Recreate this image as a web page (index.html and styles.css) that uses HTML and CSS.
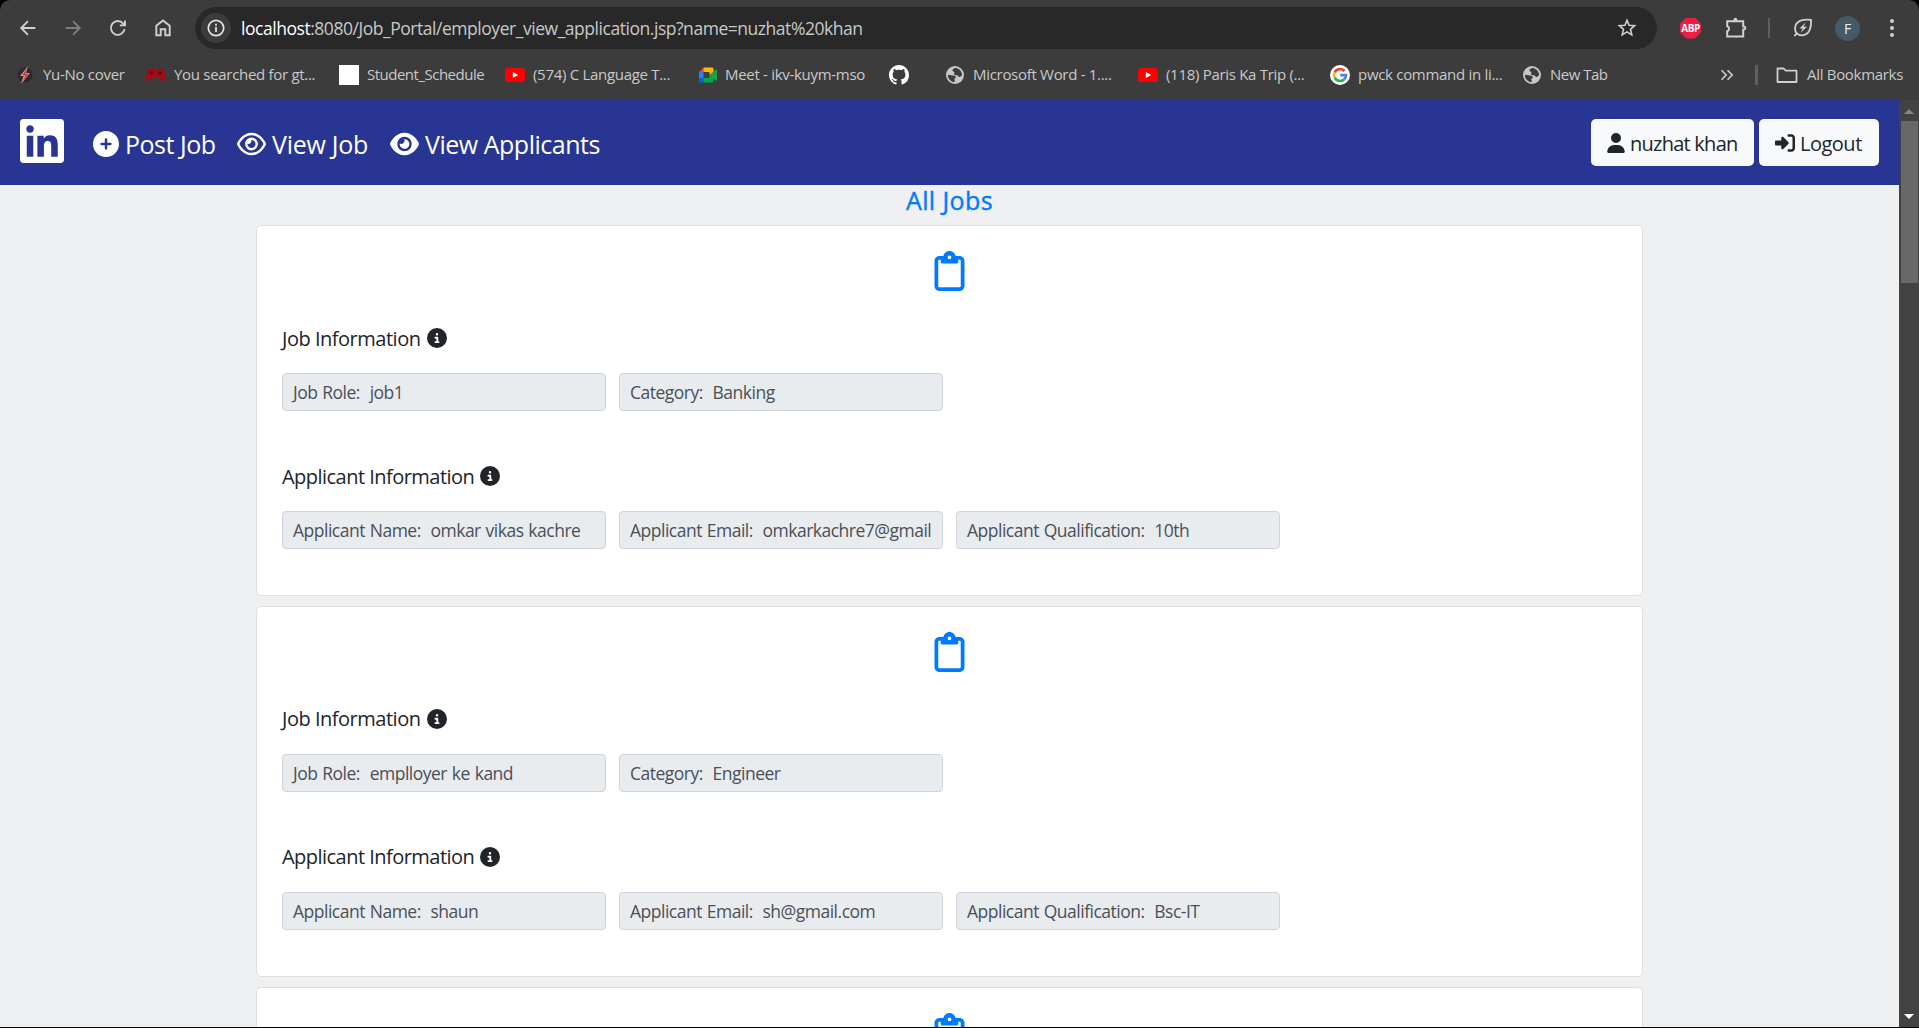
FILE: index.html
```html
<!DOCTYPE html>
<html lang="en">
<head>
<meta charset="utf-8">
<title>All Jobs</title>
<link rel="stylesheet" href="styles.css">
</head>
<body>
<svg class="sprite" aria-hidden="true">
  <symbol id="info" viewBox="0 0 512 512"><path d="M256 512A256 256 0 1 0 256 0a256 256 0 1 0 0 512zM216 336h24V272H216c-13.3 0-24-10.7-24-24s10.7-24 24-24h48c13.3 0 24 10.7 24 24v88h8c13.3 0 24 10.7 24 24s-10.7 24-24 24H216c-13.3 0-24-10.7-24-24s10.7-24 24-24zm40-208a32 32 0 1 1 0 64 32 32 0 1 1 0-64z"/></symbol>
  <symbol id="clipboard" viewBox="0 0 384 512"><path d="M280 64h40c35.3 0 64 28.7 64 64V448c0 35.3-28.7 64-64 64H64c-35.3 0-64-28.7-64-64V128C0 92.7 28.7 64 64 64h40 9.6C121 27.5 153.3 0 192 0s71 27.5 78.4 64H280zM64 112c-8.8 0-16 7.2-16 16V448c0 8.8 7.2 16 16 16H320c8.8 0 16-7.2 16-16V128c0-8.8-7.2-16-16-16H304v24c0 13.3-10.7 24-24 24H192 104c-13.3 0-24-10.7-24-24V112H64zm128-8a24 24 0 1 0 0-48 24 24 0 1 0 0 48z"/></symbol>
  <symbol id="youtube" viewBox="0 0 20 14"><rect width="20" height="14" rx="3.2" fill="#f00"/><path d="M7.8 4v6l5.4-3z" fill="#fff"/></symbol>
  <symbol id="globe" viewBox="0 0 18 18"><circle cx="9" cy="9" r="9" fill="#c4c7cb"/><path fill="#3c3c3c" d="M9.6 1.9C7.800 2.300 6.200 3 6.500 4.500c.2 1.200 1.500 1 1.900 1.700.4.900-.6 1.200-.5 2 .2 1.100 2 .8 3.200 1 1.300.3 1 1.600 2.300 1.700 1.200.1 1.600-.9 2.700-1.300.2-3.400-2.200-7.200-6.500-7.700zM1.900 8.700c-.1 4.200 3 7.100 6.600 7.400.4-.9.500-1.600 0-2.200-.5-.7.3-1.400 1-1.900.8-.7.200-1.800-.9-2.200-2-.6-4.400-.9-6.700-1.100z"/></symbol>
</svg>

<div class="browser">
  <div class="toolbar">
    <div class="nav-icons">
      <svg width="20" height="20" viewBox="0 0 20 20"><path d="M17.3 10H3.5M10 3.2 3.2 10l6.8 6.8" fill="none" stroke="#d0d0d0" stroke-width="1.9"/></svg>
      <svg width="20" height="20" viewBox="0 0 20 20"><path d="M2.7 10h13.8M10 3.2l6.8 6.8-6.8 6.8" fill="none" stroke="#7d7d7d" stroke-width="1.9"/></svg>
      <svg width="20" height="20" viewBox="0 0 20 20"><path d="M16.6 11.2A6.9 6.9 0 1 1 15 5.4l1.4 1.5M17 2.4v5h-5.2" fill="none" stroke="#d0d0d0" stroke-width="1.9"/></svg>
      <svg width="20" height="20" viewBox="0 0 20 20"><path d="M3.3 17.2V7.8L10 2.4l6.7 5.4v9.4h-4.4v-6H7.7v6z" fill="none" stroke="#d0d0d0" stroke-width="1.9"/></svg>
    </div>
    <div class="address">
      <span class="site-info"><svg width="18" height="18" viewBox="0 0 18 18"><circle cx="9" cy="9" r="7.7" fill="none" stroke="#e3e3e3" stroke-width="1.7"/><path d="M9 8v5M9 4.8v1.9" stroke="#e3e3e3" stroke-width="1.8"/></svg></span>
      <span class="url"><b>localhost</b>:8080/Job_Portal/employer_view_application.jsp?name=nuzhat%20khan</span>
      <svg class="star" width="20" height="20" viewBox="0 0 20 20"><path d="m10 2.200 2.100 5 5.600.5-4.200 3.700 1.300 5.500-4.800-3-4.800 3 1.300-5.500-4.200-3.700 5.600-.5z" fill="none" stroke="#d0d0d0" stroke-width="1.600"/></svg>
    </div>
    <div class="tools">
      <span class="abp">ABP</span>
      <svg class="ext" width="22" height="22" viewBox="0 0 22 22"><path d="M2.200 4.200h16v5.300h.6a1.500 1.500 0 0 1 0 3h-.6v6.900h-16v-5.100a2.600 2.600 0 0 0 0-5z" fill="none" stroke="#d0d0d0" stroke-width="2"/><path d="M8.500 4V2.700a1.900 1.900 0 0 1 3.800 0V4z" fill="#d0d0d0"/></svg>
      <i class="rule"></i>
      <svg class="leaf" width="20" height="20" viewBox="0 0 20 20"><path d="M18 1.800c-7-.8-15.600.3-16 8.600-.1 4 3 7 6.800 6.900C16.700 17 18.600 9 18 1.800zM4.400 14.800 1.300 18" fill="none" stroke="#d0d0d0" stroke-width="1.800"/><path d="M12.500 4.500 6.500 10.500h3.200l-2 4.300 6.300-6h-3.300z" fill="#d0d0d0"/></svg>
      <span class="avatar">F</span>
      <svg class="dots" width="6" height="20" viewBox="0 0 6 20"><g fill="#d0d0d0"><circle cx="3" cy="3" r="2"/><circle cx="3" cy="10" r="2"/><circle cx="3" cy="17" r="2"/></g></svg>
    </div>
  </div>

  <div class="bookmarks">
    <span class="bm"><svg viewBox="0 0 20 20"><circle cx="10" cy="10" r="7.500" fill="#2b2b2e"/><path d="M13 1 5 11h3.500L6 19l9-11h-4z" fill="#e8858c"/><path d="m11.500 4-3.800 6h3l-2.200 5 4.500-6h-3z" fill="#c32c3b"/></svg><span>Yu-No cover</span></span>
    <span class="bm"><svg viewBox="0 0 20 20"><path d="M4 3.600h3l1 1h4l1-1h3c2.600 0 3.600 5.400 4 9.800.2 3.200-2.600 4.200-4.200 2L14 13H6l-1.800 2.400c-1.600 2.200-4.400 1.200-4.200-2 .4-4.400 1.400-9.800 4-9.800z" fill="#a00b14"/><path d="M5.500 6v4M3.500 8h4" stroke="#5d060c" stroke-width="1.200"/><circle cx="14" cy="8" r="1.700" fill="#5d060c"/></svg><span>You searched for gt...</span></span>
    <span class="bm"><svg viewBox="0 0 20 20"><path d="M0 0h20v20H0z" fill="#fff"/></svg><span class="tight">Student_Schedule</span></span>
    <span class="bm"><svg viewBox="0 -3 20 20"><use href="#youtube" width="20" height="14"/></svg><span>(574) C Language T...</span></span>
    <span class="bm meet"><svg viewBox="0 0 20 20"><path d="M1 7h4.500v6H1z" fill="#2684fc"/><path d="M5.500 2.500V7H1z" fill="#ea4335"/><path d="M5.500 2.500h8.700q1.300 0 1.300 1.300V7l-4 3V7h-6z" fill="#ffba00"/><path d="M1 13h4.500v4.500H2.300Q1 17.500 1 16.200z" fill="#0066da"/><path d="M5.500 13h6v-3l4 3v3.200q0 1.300-1.300 1.300H5.500z" fill="#00ac47"/><path d="m11.500 10 6.400-5.600q1.100-.6 1.100.6v10q0 1.200-1.100.6z" fill="#1fa14b"/></svg><span>Meet - ikv-kuym-mso</span></span>
    <span class="bm"><svg viewBox="0 0 16 16"><path fill="#fff" d="M8 0C3.580 0 0 3.580 0 8c0 3.540 2.290 6.530 5.470 7.590.4.070.55-.17.55-.38 0-.19-.01-.82-.01-1.490-2.010.37-2.530-.49-2.690-.94-.09-.23-.48-.94-.82-1.130-.28-.15-.68-.52-.01-.53.630-.01 1.080.58 1.230.82.720 1.210 1.870.87 2.330.66.070-.52.280-.87.510-1.070-1.780-.2-3.640-.89-3.640-3.950 0-.87.310-1.590.820-2.150-.08-.2-.36-1.020.080-2.120 0 0 .67-.21 2.200.82.640-.18 1.320-.27 2-.27s1.360.09 2 .27c1.530-1.040 2.200-.82 2.200-.82.440 1.100.160 1.920.080 2.120.510.56.820 1.270.820 2.150 0 3.070-1.870 3.750-3.650 3.950.290.25.540.73.540 1.480 0 1.070-.01 1.930-.01 2.200 0 .21.150.46.550.38A8.010 8.010 0 0 0 16 8c0-4.420-3.580-8-8-8z"/></svg></span>
    <span class="bm"><svg viewBox="0 0 20 20"><use href="#globe" x="1" y="1" width="18" height="18"/></svg><span>Microsoft Word - 1....</span></span>
    <span class="bm"><svg viewBox="0 -3 20 20"><use href="#youtube" width="20" height="14"/></svg><span>(118) Paris Ka Trip (...</span></span>
    <span class="bm"><svg viewBox="0 0 20 20"><circle cx="10" cy="10" r="10" fill="#fff"/><g fill="none" stroke-width="2.700"><path d="M14.600 6.100A6 6 0 0 0 4.700 7.300" stroke="#ea4335"/><path d="M4.700 7.300a6 6 0 0 0 0 5.400" stroke="#fbbc05"/><path d="M4.700 12.700a6 6 0 0 0 9.300 1.800" stroke="#34a853"/><path d="M10.200 10.100H16a6 6 0 0 1-2 4.400" stroke="#4285f4"/></g></svg><span>pwck command in li...</span></span>
    <span class="bm"><svg viewBox="0 0 20 20"><use href="#globe" x="1" y="1" width="18" height="18"/></svg><span class="tight">New Tab</span></span>
    <svg class="more" width="14" height="12" viewBox="0 0 14 12"><path d="m1.500 1.200 4.700 4.800-4.700 4.800M7.500 1.200l4.700 4.800-4.700 4.800" fill="none" stroke="#d0d0d0" stroke-width="1.600"/></svg>
    <i class="rule"></i>
    <span class="bm all"><svg viewBox="0 0 22 18"><path d="M1.500 14.500v-12h6.200l2.100 2.200h10.700v11.300h-19z" fill="none" stroke="#d0d0d0" stroke-width="1.800" stroke-linejoin="round"/></svg><span>All Bookmarks</span></span>
  </div>
</div>

<div class="viewport">
  <div class="page">
    <nav class="navbar">
      <svg class="brand" viewBox="0 32 448 448"><path d="M416 32H31.900C14.300 32 0 46.500 0 64.300v383.400C0 465.500 14.300 480 31.900 480H416c17.600 0 32-14.500 32-32.300V64.300c0-17.800-14.400-32.300-32-32.300zM135.400 416H69V202.200h66.500V416zm-33.200-243c-21.300 0-38.500-17.300-38.500-38.500S80.900 96 102.200 96c21.200 0 38.500 17.300 38.500 38.500 0 21.300-17.200 38.500-38.500 38.500zm282.100 243h-66.400V312c0-24.800-.5-56.700-34.500-56.700-34.600 0-39.900 27-39.900 54.900V416h-66.400V202.200h63.700v29.200h.9c8.900-16.800 30.600-34.500 62.900-34.500 67.200 0 79.700 44.300 79.700 101.900V416z"/></svg>
      <a class="link post"><svg viewBox="0 0 512 512"><path d="M256 512A256 256 0 1 0 256 0a256 256 0 1 0 0 512zM232 344V280H168c-13.300 0-24-10.700-24-24s10.700-24 24-24h64V168c0-13.300 10.700-24 24-24s24 10.700 24 24v64h64c13.300 0 24 10.700 24 24s-10.700 24-24 24H280v64c0 13.300-10.700 24-24 24s-24-10.700-24-24z"/></svg><span>Post Job</span></a>
      <a class="link jobs"><svg viewBox="0 0 576 512"><path d="M288 80c-65.200 0-118.800 29.600-159.900 67.700C89.600 183.500 63 226 49.400 256c13.600 30 40.200 72.500 78.600 108.300C169.200 402.400 222.800 432 288 432s118.800-29.600 159.900-67.700C486.400 328.500 513 286 526.600 256c-13.600-30-40.200-72.500-78.700-108.300C406.800 109.600 353.200 80 288 80zM95.400 112.600C142.500 68.800 207.200 32 288 32s145.500 36.800 192.600 80.600c46.800 43.500 78.100 95.400 93 131.100c3.300 7.900 3.300 16.700 0 24.600c-14.900 35.700-46.200 87.700-93 131.100C433.500 443.200 368.800 480 288 480s-145.500-36.800-192.600-80.600C48.600 356 17.300 304 2.500 268.300c-3.300-7.900-3.300-16.700 0-24.600C17.300 208 48.600 156 95.400 112.600zM288 336c44.200 0 80-35.800 80-80s-35.800-80-80-80c-.7 0-1.300 0-2 0c1.300 5.100 2 10.500 2 16c0 35.300-28.700 64-64 64c-5.500 0-10.900-.7-16-2c0 .7 0 1.300 0 2c0 44.200 35.800 80 80 80zm0-208a128 128 0 1 1 0 256 128 128 0 1 1 0-256z"/></svg><span>View Job</span></a>
      <a class="link applicants"><svg viewBox="0 0 576 512"><path d="M288 32c-80.800 0-145.500 36.800-192.600 80.600C48.600 156 17.300 208 2.500 243.700c-3.300 7.900-3.300 16.700 0 24.600C17.300 304 48.600 356 95.400 399.400C142.500 443.200 207.200 480 288 480s145.500-36.800 192.600-80.600c46.800-43.500 78.100-95.400 93-131.100c3.300-7.900 3.300-16.700 0-24.600c-14.900-35.700-46.200-87.700-93-131.100C433.500 68.800 368.800 32 288 32zM144 256a144 144 0 1 1 288 0 144 144 0 1 1 -288 0zm144-64c0 35.300-28.700 64-64 64c-7.100 0-13.900-1.200-20.300-3.300c-5.500-1.800-11.900 1.600-11.700 7.400c.3 6.900 1.300 13.800 3.200 20.700c13.700 51.200 66.400 81.600 117.600 67.900s81.600-66.400 67.900-117.600c-11.100-41.500-47.800-69.400-88.600-71.100c-5.800-.2-9.200 6.100-7.400 11.700c2.100 6.400 3.300 13.200 3.300 20.300z"/></svg><span>View Applicants</span></a>
      <div class="account">
        <a class="btn user"><svg viewBox="0 0 448 512"><path d="M224 256A128 128 0 1 0 224 0a128 128 0 1 0 0 256zm-45.700 48C79.800 304 0 383.800 0 482.300C0 498.700 13.300 512 29.700 512H418.300c16.400 0 29.700-13.300 29.700-29.700C448 383.800 368.200 304 269.700 304H178.300z"/></svg><span>nuzhat khan</span></a>
        <a class="btn logout"><svg viewBox="0 0 512 512"><path d="M217.900 105.900L340.700 228.700c7.200 7.200 11.300 17.100 11.300 27.300s-4.100 20.100-11.300 27.300L217.900 406.100c-6.400 6.400-15 9.900-24 9.900c-18.700 0-33.900-15.200-33.900-33.900l0-62.100L32 320c-17.700 0-32-14.300-32-32l0-64c0-17.700 14.300-32 32-32l128 0 0-62.100c0-18.700 15.200-33.900 33.900-33.900c9 0 17.600 3.600 24 9.900zM352 416l64 0c17.700 0 32-14.300 32-32l0-256c0-17.700-14.300-32-32-32l-64 0c-17.700 0-32-14.300-32-32s14.300-32 32-32l64 0c53 0 96 43 96 96l0 256c0 53-43 96-96 96l-64 0c-17.700 0-32-14.300-32-32s14.300-32 32-32z"/></svg><span>Logout</span></a>
      </div>
    </nav>
    <main class="content">
      <h1>All Jobs</h1>
      <section class="card">
        <svg class="clip"><use href="#clipboard"/></svg>
        <h2>Job Information <svg><use href="#info"/></svg></h2>
        <div class="fields"><div class="field">Job Role:&nbsp; job1</div><div class="field">Category:&nbsp; Banking</div></div>
        <h2>Applicant Information <svg><use href="#info"/></svg></h2>
        <div class="fields"><div class="field">Applicant Name:&nbsp; omkar vikas kachre</div><div class="field">Applicant Email:&nbsp; omkarkachre7@gmail</div><div class="field">Applicant Qualification:&nbsp; 10th</div></div>
      </section>
      <section class="card">
        <svg class="clip"><use href="#clipboard"/></svg>
        <h2>Job Information <svg><use href="#info"/></svg></h2>
        <div class="fields"><div class="field">Job Role:&nbsp; emplloyer ke kand</div><div class="field">Category:&nbsp; Engineer</div></div>
        <h2>Applicant Information <svg><use href="#info"/></svg></h2>
        <div class="fields"><div class="field">Applicant Name:&nbsp; shaun</div><div class="field">Applicant Email:&nbsp; sh@gmail.com</div><div class="field">Applicant Qualification:&nbsp; Bsc-IT</div></div>
      </section>
      <section class="card">
        <svg class="clip"><use href="#clipboard"/></svg>
      </section>
    </main>
  </div>
  <div class="scrollbar">
    <svg width="10" height="5" viewBox="0 0 10 5"><path d="M0 5 5 0l5 5z" fill="#858585"/></svg>
    <div class="thumb"></div>
    <svg class="down" width="10" height="5" viewBox="0 0 10 5"><path d="M0 0h10L5 5z" fill="#fff"/></svg>
  </div>
</div>
</body>
</html>
```
FILE: styles.css
```css
* { box-sizing: border-box; }
body {
  margin: 0;
  height: 1028px;
  overflow: hidden;
  display: flex;
  flex-direction: column;
  background: #000;
  font-family: "Open Sans", "Noto Sans", sans-serif;
  white-space: nowrap;
}
svg { display: block; flex: none; }
.sprite { position: absolute; width: 0; height: 0; }

/* browser chrome */
.browser {
  flex: none;
  height: 100px;
  background: #3c3c3c;
  border-radius: 10px 10px 0 0;
  color: #c9c9c9;
}
.toolbar { display: flex; padding-top: 7px; height: 49px; }
.nav-icons { display: flex; gap: 25px; align-items: center; height: 42px; padding-left: 18px; width: 195px; }
.address {
  width: 1462px;
  height: 42px;
  border-radius: 21px;
  background: #282828;
  display: flex;
  align-items: center;
  padding: 0 20px 0 6px;
}
.site-info { width: 30px; height: 30px; border-radius: 50%; background: #3c3c3c; display: grid; place-items: center; }
.url { margin-left: 10px; font-size: 17.500px; letter-spacing: -.46px; }
.url b { font-weight: 400; color: #fff; }
.star { margin-left: auto; }
.tools { display: flex; align-items: center; height: 42px; flex: 1; }
.abp {
  margin-left: 23px;
  width: 21px; height: 21px;
  background: #ed1e45;
  clip-path: polygon(30% 0, 70% 0, 100% 30%, 100% 70%, 70% 100%, 30% 100%, 0 70%, 0 30%);
  color: #fff;
  font: 700 10px/21px "Open Sans", sans-serif;
  letter-spacing: -.4px;
  text-align: center;
}
.ext { margin-left: 24px; }
.rule { width: 2px; height: 20px; background: #5f5f5f; }
.bookmarks .rule { width: 3px; }
.tools .rule { margin-left: 21px; }
.leaf { margin-left: 23px; }
.avatar { margin-left: 22px; width: 25px; height: 25px; border-radius: 50%; background: #455a68; color: #eee; font: 14px/25px "Open Sans", sans-serif; text-align: center; }
.dots { margin-left: 29px; }

.bookmarks {
  display: grid;
  grid-template-columns: 131px 193px 166px 191px 193px 56px 193px 192px 192px 198px 35px 20px 1fr;
  align-items: center;
  height: 51px;
  padding-left: 15px;
  font-size: 15px;
  letter-spacing: -.3px;
}
.bm { display: flex; align-items: center; gap: 8px; }
.bm svg { width: 20px; height: 20px; }
.bm span { margin-top: -2px; }
.bm .tight { letter-spacing: -.5px; }
.meet { padding-left: 2px; gap: 7px; }
.all { gap: 9px; padding-left: 1px; }
.all svg { width: 22px; height: 18px; }

/* page area */
.viewport { display: flex; height: 927px; overflow: hidden; }
.page { width: 1899px; background: #eff0f2; }
.navbar {
  height: 85px;
  background: #283593;
  color: #fff;
  display: flex;
  align-items: center;
  padding: 0 20px;
}
.navbar svg { fill: currentColor; }
.brand { width: 44px; height: 44px; margin: 0 29px 3px 0; }
.link { display: flex; align-items: center; gap: 6px; font-size: 25px; letter-spacing: -.48px; }
.link svg { width: 29px; height: 26px; margin-top: 2px; }
.post { width: 144px; }
.post svg { width: 26px; }
.jobs { width: 153px; letter-spacing: -.25px; }
.link span { padding-top: 2px; }
.account { display: flex; gap: 5px; margin-left: auto; }
.btn {
  display: flex;
  align-items: center;
  height: 47px;
  border-radius: 5px;
  background: #f8f9fa;
  color: #212529;
  font-size: 20px;
  letter-spacing: -.5px;
  padding-left: 16px;
}
.user { width: 163px; letter-spacing: -.75px; }
.user svg { width: 18px; height: 20px; margin-right: 5px; }
.logout { width: 120px; }
.logout svg { width: 20px; height: 20px; margin-right: 5px; }
.btn span { padding-top: 1px; }

.content { width: 1387px; margin: 0 auto; }
h1 {
  margin: 0;
  height: 40px;
  font-size: 25px;
  line-height: 30px;
  font-weight: 500;
  letter-spacing: .4px;
  -webkit-text-stroke: .4px #007bff;
  color: #007bff;
  text-align: center;
}
.card {
  height: 370.75px;
  margin-bottom: 10px;
  padding: 25px;
  border: 1px solid #dfdfdf;
  border-radius: 5px;
  background: #fff;
  color: #212529;
}
.clip { width: 31px; height: 40px; margin: 0 auto; fill: #007bff; }
h2 { display: flex; align-items: center; gap: 6px; margin: 31px 0 19px; height: 32px; font-size: 20px; font-weight: 400; letter-spacing: -.48px; }
h2 svg { width: 20px; height: 20px; fill: #212529; }
.fields { display: flex; gap: 13px; }
.fields + h2 { margin-top: 49px; letter-spacing: -.53px; }
.field {
  width: 324px;
  height: 38px;
  border: 1px solid #ced4da;
  border-radius: 4px;
  background: #e9ecef;
  padding-left: 10px;
  font-size: 17.500px;
  line-height: 37px;
  letter-spacing: -.5px;
  word-spacing: .8px;
  color: #495057;
}

.scrollbar { width: 20px; background: #424242; display: flex; flex-direction: column; align-items: center; padding: 9px 0 8px; }
.thumb { width: 17px; height: 162px; margin-top: 7px; background: #686868; }
.down { margin-top: auto; }
```
